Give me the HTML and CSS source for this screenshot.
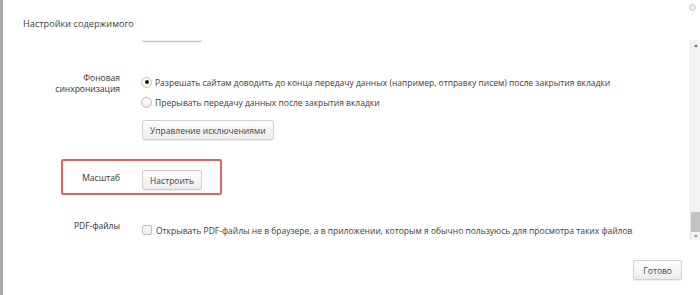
FILE: index.html
```
<!DOCTYPE html>
<html lang="ru">
<head>
    <meta charset="UTF-8">
    <title>Настройки содержимого</title>
    <link rel="stylesheet" href="styles.css">
</head>
<body>
<div class="dialog">
    <div class="head">
        <h1 class="title">Настройки содержимого</h1>
        <span class="close"></span>
    </div>

    <div class="main">
        <div class="view">
            <div class="list">
                <div class="row">
                    <div class="label"></div>
                    <div class="ctrl">
                        <button class="btn btn-min"></button>
                    </div>
                </div>

                <div class="row">
                    <div class="label">Фоновая<br>синхронизация</div>
                    <div class="ctrl">
                        <label class="option"><span class="radio checked"></span>Разрешать сайтам доводить до конца передачу данных (например, отправку писем) после закрытия вкладки</label>
                        <label class="option"><span class="radio"></span>Прерывать передачу данных после закрытия вкладки</label>
                        <button class="btn btn-gap">Управление исключениями</button>
                    </div>
                </div>

                <div class="row marked">
                    <div class="label">Масштаб</div>
                    <div class="ctrl">
                        <button class="btn btn-min">Настроить</button>
                    </div>
                </div>

                <div class="row">
                    <div class="label">PDF-файлы</div>
                    <div class="ctrl">
                        <label class="option"><span class="check"></span>Открывать PDF-файлы не в браузере, а в приложении, которым я обычно пользуюсь для просмотра таких файлов</label>
                    </div>
                </div>
            </div>
        </div>

        <div class="scrollbar">
            <span class="arrow up"></span>
            <div class="track"><span class="thumb"></span></div>
            <span class="arrow down"></span>
        </div>
    </div>

    <div class="foot">
        <button class="btn">Готово</button>
    </div>
</div>
</body>
</html>
```
FILE: styles.css
```
* {
    margin: 0;
    padding: 0;
    box-sizing: border-box;
}

body {
    background-color: #fff;
    color: #3d3d3d;
    font-family: "Open Sans", "Noto Sans", sans-serif;
    font-size: 8.5px;
}

.dialog {
    display: flex;
    flex-direction: column;
    height: 295px;
    border-left: 3px solid #a9a9a9;
}

.head {
    display: flex;
    justify-content: space-between;
    height: 40px;
}

.title {
    padding: 18px 0 0 20px;
    font-size: 9.2px;
    font-weight: 400;
    line-height: 12px;
}

.close {
    width: 7px;
    height: 7px;
    margin: 4px 4px 0 0;
    border: 1px solid #c8c8c8;
    border-radius: 50%;
    background-color: #ececec;
}

.main {
    display: flex;
    height: 200px;
}

.view {
    flex: 1;
    overflow: hidden;
}

.list {
    display: flex;
    flex-direction: column;
    gap: 30px;
    margin-top: -18px;
}

.row {
    display: grid;
    grid-template-columns: 117px 1fr;
    column-gap: 22px;
    position: relative;
}

.marked::before {
    content: "";
    position: absolute;
    top: -11px;
    bottom: -5px;
    left: 58px;
    width: 157px;
    border: 2px solid #e06464;
    border-radius: 2px;
}

.label {
    text-align: right;
    line-height: 11px;
    color: #333;
}

.marked .label {
    padding-top: 2px;
}

.ctrl {
    display: flex;
    flex-direction: column;
    align-items: flex-start;
}

.option {
    display: flex;
    align-items: center;
    height: 20px;
    white-space: nowrap;
}

.radio {
    position: relative;
    width: 11px;
    height: 11px;
    margin: 0 3px 0 -1px;
    border: 1px solid #bcbcbc;
    border-radius: 50%;
    background: linear-gradient(#fdfdfd, #ececec);
}

.radio.checked {
    border-color: #cfc293;
    background: #fffbea;
}

.radio.checked::after {
    content: "";
    position: absolute;
    top: 2.5px;
    left: 2.5px;
    width: 4px;
    height: 4px;
    border-radius: 50%;
    background-color: #1e1e1e;
}

.check {
    width: 10px;
    height: 10px;
    margin: 0 4px 0 0;
    border: 1px solid #bdbdbd;
    border-radius: 2px;
    background: linear-gradient(#fdfdfd, #ebebeb);
}

.btn {
    height: 20px;
    padding: 0 7px;
    border: 1px solid #d0d0d0;
    border-radius: 2px;
    background: linear-gradient(#fefefe, #ededed);
    box-shadow: 0 1px 1px rgba(0, 0, 0, .08);
    color: #444;
    font-family: inherit;
    font-size: 8.5px;
}

.btn-min {
    min-width: 60px;
}

.btn-gap {
    margin-top: 8px;
}

.scrollbar {
    display: flex;
    flex-direction: column;
    width: 10px;
    border-left: 1px solid #e6e6e6;
    background-color: #f3f3f3;
}

.arrow {
    display: flex;
    justify-content: center;
    align-items: center;
    height: 10px;
}

.arrow.down {
    height: 8px;
}

.arrow::before {
    content: "";
    border: 2.5px solid transparent;
}

.up::before {
    border-top: 0;
    border-bottom: 3px solid #6f6f6f;
}

.down::before {
    border-bottom: 0;
    border-top: 3px solid #9a9a9a;
}

.track {
    display: flex;
    flex: 1;
    flex-direction: column;
    justify-content: flex-end;
}

.thumb {
    height: 20px;
    background-color: #c3c3c3;
}

.foot {
    display: flex;
    justify-content: flex-end;
    padding: 20px 18px 0 0;
}

.foot .btn {
    padding: 0 9px;
}
```
